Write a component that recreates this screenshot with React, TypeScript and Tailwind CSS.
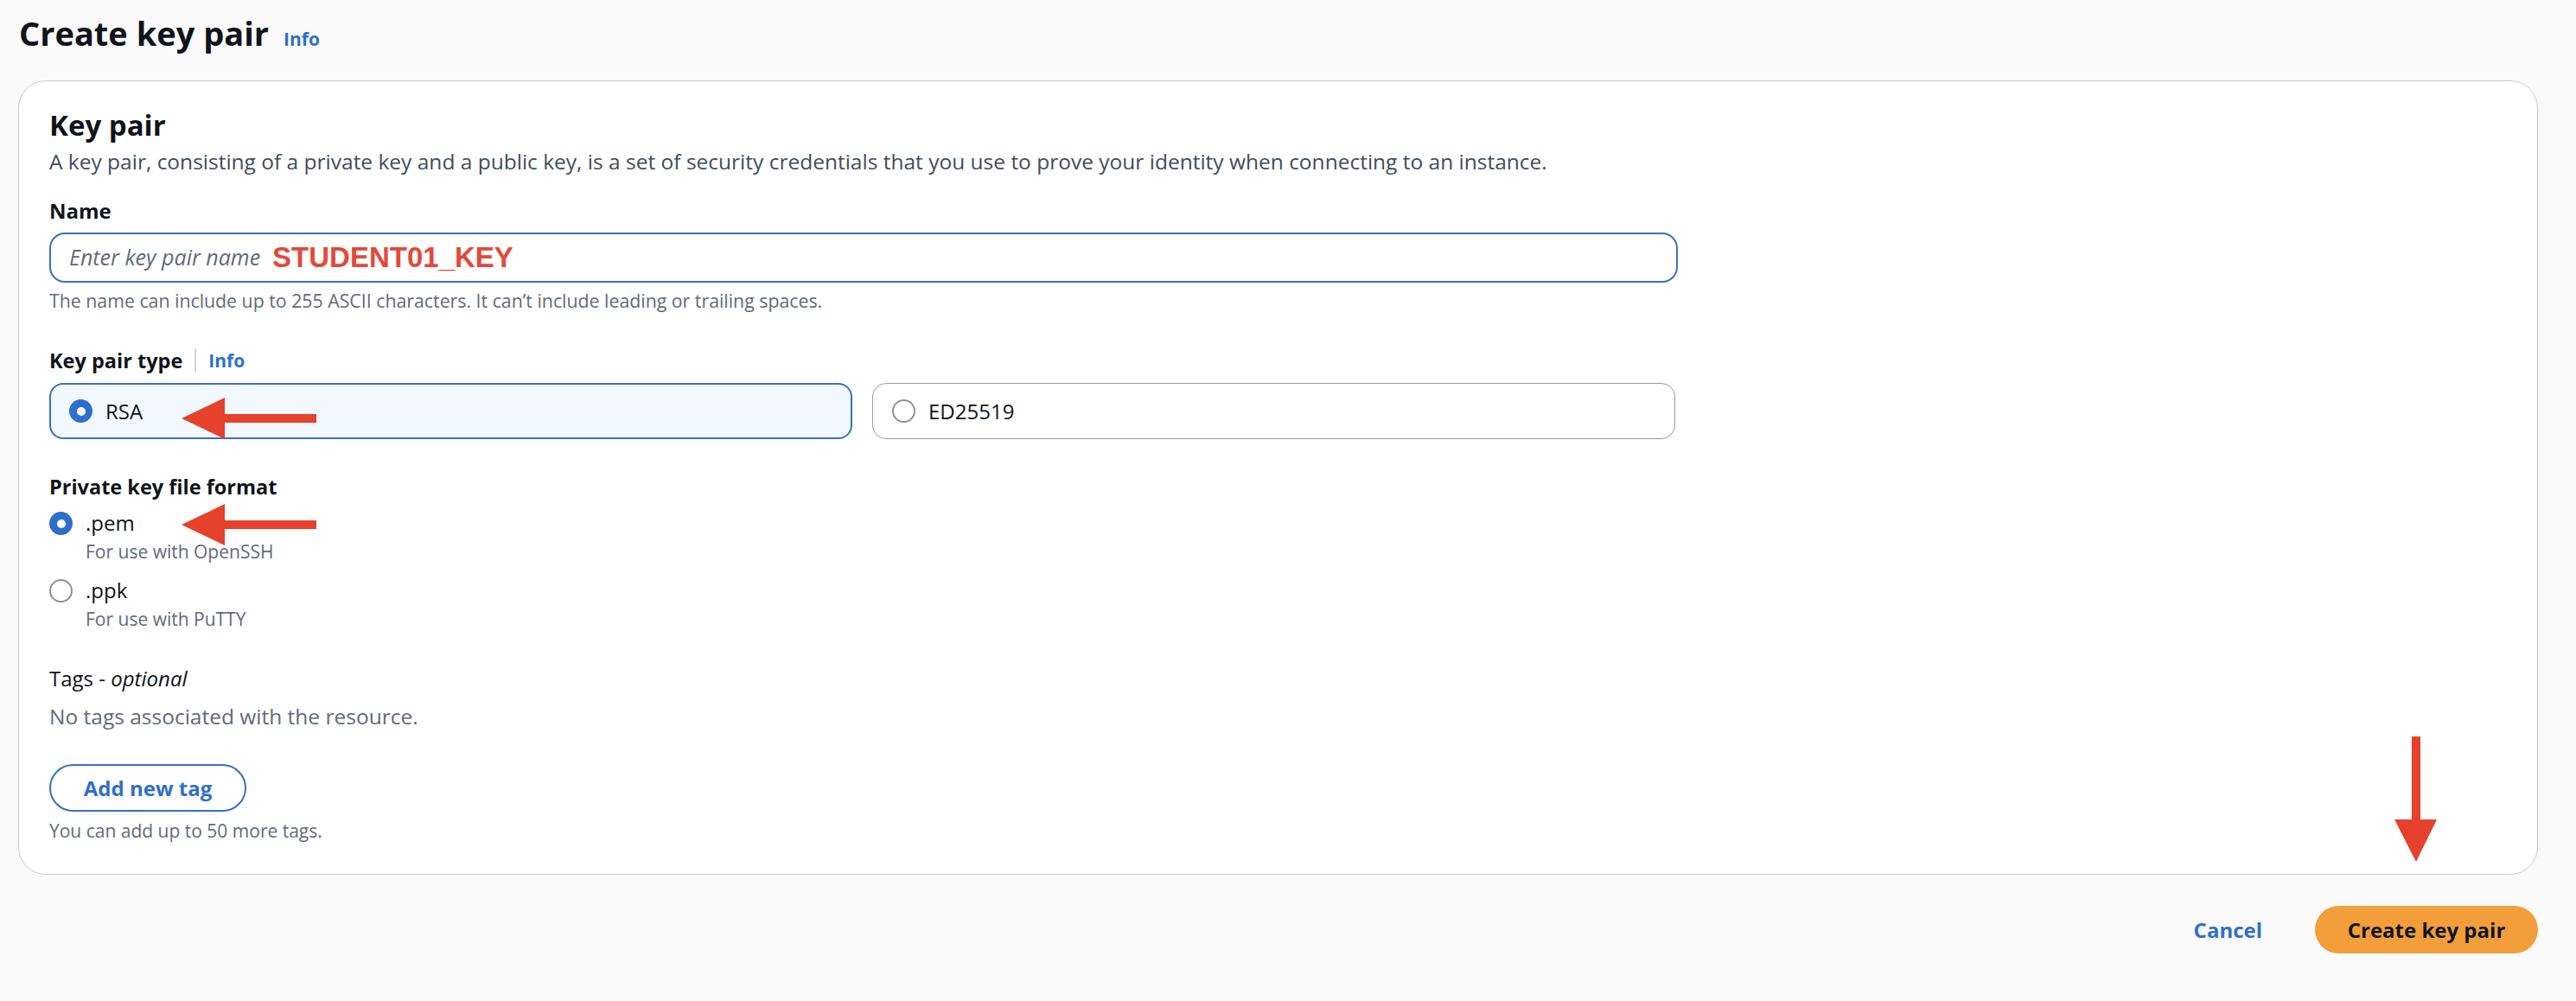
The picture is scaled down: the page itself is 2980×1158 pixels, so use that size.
import React from 'react';

const Radio: React.FC<{ checked?: boolean }> = ({ checked }) =>
  checked ? (
    <span className="flex h-[27px] w-[27px] shrink-0 items-center justify-center rounded-full bg-[#2f6fcb]">
      <span className="h-[10px] w-[10px] rounded-full bg-white" />
    </span>
  ) : (
    <span className="block h-[27px] w-[27px] shrink-0 rounded-full border-2 border-[#8d9199] bg-white" />
  );

export default function App() {
  return (
    <div className="relative min-h-[1158px] w-[2980px] bg-[#fafafb] pl-[21px] pr-[44px] pt-[14px] font-['Open_Sans',sans-serif] text-[#0f141a]">
      {/* Page header */}
      <div className="ml-px flex items-baseline gap-[17px]">
        <h1 className="text-[38px] font-bold leading-[48px]">Create key pair</h1>
        <span className="text-[21px] font-bold text-[#2f6fcb]">Info</span>
      </div>

      {/* Key pair container */}
      <div className="mt-[31px] rounded-[32px] border border-[#c9ccd1] bg-white pb-[36px] pl-[35px] pt-[31px]">
        <h2 className="text-[33px] font-bold leading-[40px]">Key pair</h2>
        <p className="mt-[5px] text-[24.5px] leading-[34px] text-[#414d5c]">
          A key pair, consisting of a private key and a public key, is a set of security credentials that you use to prove your identity when connecting to an instance.
        </p>

        <div className="mt-[24px] text-[24px] font-bold leading-[32px]">Name</div>
        <div className="mt-[9px] flex h-[58px] w-[1884px] items-center gap-[14px] rounded-[18px] border-2 border-[#3b6fc4] pl-[21px]">
          <span className="text-[25px] italic text-[#5f6b7a]">Enter key pair name</span>
          <span className="font-['Liberation_Sans',sans-serif] text-[33px] font-bold text-[#e3493a]">STUDENT01_KEY</span>
        </div>
        <p className="mt-[7px] text-[21.3px] leading-[28px] text-[#5f6b7a]">
          The name can include up to 255 ASCII characters. It can’t include leading or trailing spaces.
        </p>

        <div className="mt-[39px] flex items-center text-[24px] leading-[32px]">
          <span className="text-[23.5px] font-bold">Key pair type</span>
          <span className="mx-[14px] h-[28px] border-l-2 border-[#d5d8dd]" />
          <span className="text-[21px] font-bold text-[#2f6fcb]">Info</span>
        </div>
        <div className="mt-[10px] grid w-[1881px] grid-cols-2 gap-[23px]">
          <div className="flex h-[65px] items-center gap-[15px] rounded-[16px] border-2 border-[#3b6fc4] bg-[#f1f8ff] pl-[21px]">
            <Radio checked />
            <span className="text-[24px]">RSA</span>
          </div>
          <div className="flex h-[65px] items-center gap-[15px] rounded-[16px] border border-[#9a9ca3] bg-white pl-[22px]">
            <Radio />
            <span className="text-[24px]">ED25519</span>
          </div>
        </div>

        <div className="mt-[39px] text-[23.5px] font-bold leading-[32px]">Private key file format</div>
        <div className="mt-[10px] flex items-start gap-[15px]">
          <span className="mt-[3px] flex"><Radio checked /></span>
          <div>
            <div className="text-[24px] leading-[32px]">.pem</div>
            <div className="mt-[3px] text-[21px] leading-[28px] text-[#5f6b7a]">For use with OpenSSH</div>
          </div>
        </div>
        <div className="mt-[15px] flex items-start gap-[15px]">
          <span className="mt-[3px] flex"><Radio /></span>
          <div>
            <div className="text-[24px] leading-[32px]">.ppk</div>
            <div className="mt-[3px] text-[21px] leading-[28px] text-[#5f6b7a]">For use with PuTTY</div>
          </div>
        </div>

        <div className="mt-[39px] text-[24px] leading-[32px]">
          Tags - <span className="italic">optional</span>
        </div>
        <p className="mt-[11px] text-[24.5px] leading-[34px] text-[#5f6b7a]">No tags associated with the resource.</p>
        <button className="mt-[38px] flex h-[55px] w-[228px] items-center justify-center rounded-full border-2 border-[#3b6fc4] bg-white text-[24px] font-bold text-[#2f6fcb]">
          Add new tag
        </button>
        <p className="mt-[8px] text-[21px] leading-[28px] text-[#5f6b7a]">You can add up to 50 more tags.</p>
      </div>

      {/* Footer actions */}
      <div className="mt-[36px] flex items-center justify-end">
        <span className="mr-[61px] text-[24px] font-bold text-[#2f6fcb]">Cancel</span>
        <button className="flex h-[55px] w-[258px] items-center justify-center rounded-full bg-[#f29e3a] text-[24px] font-bold text-[#0f141a]">
          Create key pair
        </button>
      </div>

      {/* Annotation arrows */}
      <svg className="pointer-events-none absolute left-0 top-0" width="2980" height="1158">
        <polygon fill="#e5412b" points="210,484 260,460 260,479 366,479 366,489 260,489 260,508" />
        <polygon fill="#e5412b" points="210,607 260,583 260,602 366,602 366,612 260,612 260,631" />
        <polygon fill="#e5412b" points="2790,852 2800,852 2800,948 2819,948 2795,997 2770,948 2790,948" />
      </svg>
    </div>
  );
}
